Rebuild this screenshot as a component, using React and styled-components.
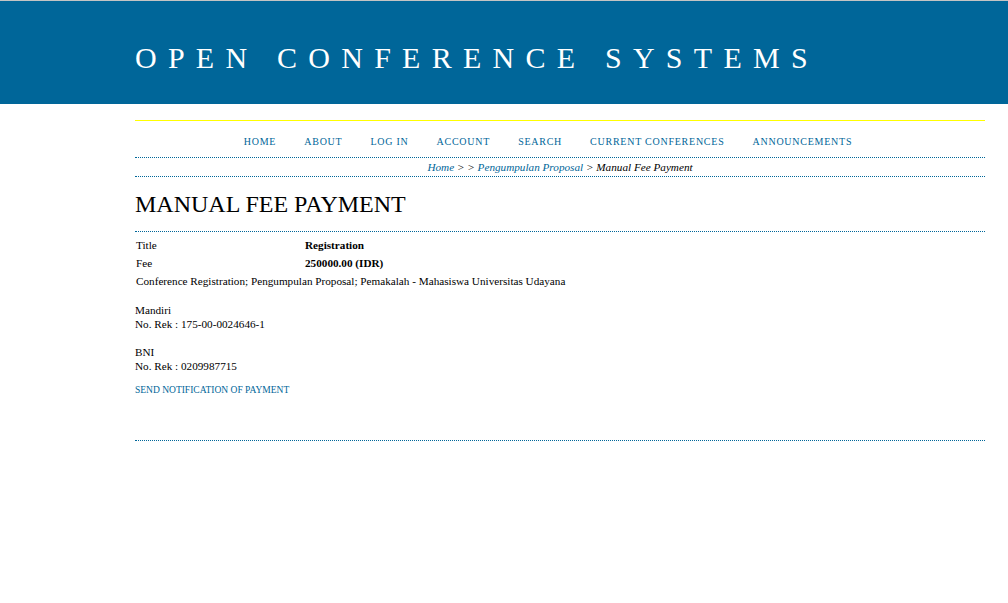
import React from "react";
import styled, { createGlobalStyle } from "styled-components";

const Global = createGlobalStyle`
  html, body { margin: 0; padding: 0; background: #ffffff; }
  body {
    font-family: "Liberation Serif", "Times New Roman", serif;
    font-size: 11.2px;
    color: #000;
  }
`;

const Header = styled.header`
  border-top: 1px solid #c4c4c4;
  background: #006699;
  height: 103px;
  box-sizing: content-box;
  display: flex;
  align-items: flex-start;
`;

const SiteTitle = styled.h1`
  margin: 0;
  padding: 40px 0 0 135px;
  font-family: "Liberation Serif", "Times New Roman", serif;
  font-weight: normal;
  font-size: 30px;
  line-height: 34px;
  letter-spacing: 11.25px;
  color: #ffffff;
  white-space: nowrap;
`;

const Body = styled.div`
  margin: 16px 0 0 135px;
  width: 850px;
`;

const Navbar = styled.nav`
  border-top: 1px solid #ffff00;
  height: 36px;
  display: flex;
  justify-content: center;
  align-items: flex-start;
`;

const NavList = styled.ul`
  list-style: none;
  margin: 0 0 0 4px;
  padding: 0;
  display: flex;
`;

const NavItem = styled.li`
  padding: 15px 28px 0 0;
  font-size: 10px;
  line-height: 12px;
  letter-spacing: 0.75px;
  text-transform: uppercase;
  color: #006699;
  white-space: nowrap;
`;

const Breadcrumb = styled.div`
  border-top: 1px dotted #006699;
  border-bottom: 1px dotted #006699;
  height: 18px;
  display: flex;
  justify-content: center;
  align-items: center;
  font-style: italic;
  font-size: 11.2px;
  white-space: nowrap;
`;

const Crumb = styled.span`
  color: ${(p) => (p.$link ? "#006699" : "#000")};
`;

const PageTitle = styled.h2`
  margin: 13px 0 0;
  padding-bottom: 13px;
  border-bottom: 1px dotted #006699;
  font-family: "Liberation Serif", "Times New Roman", serif;
  font-weight: normal;
  font-size: 24px;
  line-height: 28px;
  color: #000;
`;

const Content = styled.div`
  border-bottom: 1px dotted #006699;
  padding: 4px 0 44px;
`;

const InfoTable = styled.div`
  display: grid;
  grid-template-columns: 170px 1fr;
  grid-auto-rows: 18px;
  align-items: center;
`;

const Label = styled.div`
  padding-left: 1px;
  line-height: 13px;
`;

const Value = styled.div`
  font-weight: bold;
  line-height: 13px;
`;

const FullRow = styled.div`
  grid-column: 1 / span 2;
  padding-left: 1px;
  line-height: 13px;
`;

const Instructions = styled.p`
  margin: 13px 0 0;
  line-height: 14px;
`;

const ActionLink = styled.a`
  display: block;
  margin-top: 11px;
  font-size: 9.5px;
  line-height: 12px;
  text-transform: uppercase;
  color: #006699;
  text-decoration: none;
`;

const navItems = [
  "Home",
  "About",
  "Log In",
  "Account",
  "Search",
  "Current Conferences",
  "Announcements",
];

export default function App() {
  return (
    <>
      <Global />
      <Header>
        <SiteTitle>OPEN CONFERENCE SYSTEMS</SiteTitle>
      </Header>
      <Body>
        <Navbar>
          <NavList>
            {navItems.map((n) => (
              <NavItem key={n}>{n}</NavItem>
            ))}
          </NavList>
        </Navbar>
        <Breadcrumb>
          <Crumb $link>Home</Crumb>
          <Crumb>&nbsp;&gt; &gt;&nbsp;</Crumb>
          <Crumb $link>Pengumpulan Proposal</Crumb>
          <Crumb>&nbsp;&gt; Manual Fee Payment</Crumb>
        </Breadcrumb>
        <PageTitle>MANUAL FEE PAYMENT</PageTitle>
        <Content>
          <InfoTable>
            <Label>Title</Label>
            <Value>Registration</Value>
            <Label>Fee</Label>
            <Value>250000.00 (IDR)</Value>
            <FullRow>
              Conference Registration; Pengumpulan Proposal; Pemakalah - Mahasiswa Universitas Udayana
            </FullRow>
          </InfoTable>
          <Instructions>
            Mandiri
            <br />
            No. Rek : 175-00-0024646-1
            <br />
            <br />
            BNI
            <br />
            No. Rek : 0209987715
          </Instructions>
          <ActionLink href="#">Send Notification of Payment</ActionLink>
        </Content>
      </Body>
    </>
  );
}
